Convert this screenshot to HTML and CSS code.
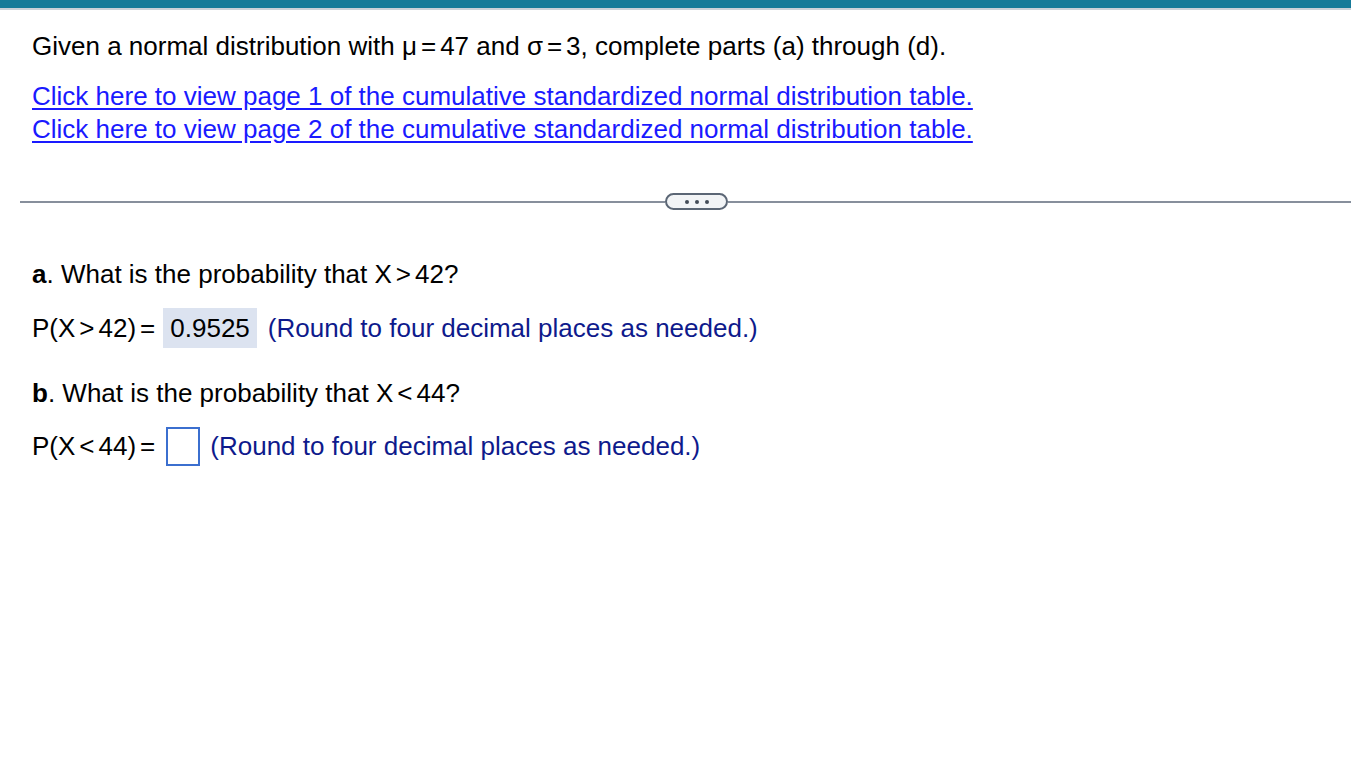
FILE: index.html
```html
<!DOCTYPE html>
<html>
<head>
<meta charset="utf-8">
<link rel="stylesheet" href="styles.css">
</head>
<body>
<div class="topbar"></div>
<div class="content">
  <p class="intro">Given a normal distribution with <span class="m">μ<span class="op">=</span>47</span> and <span class="m">σ<span class="op">=</span>3</span>, complete parts (a) through (d).</p>
  <div class="links">
    <a href="#">Click here to view page 1 of the cumulative standardized normal distribution table.</a>
    <a href="#">Click here to view page 2 of the cumulative standardized normal distribution table.</a>
  </div>
</div>
<div class="divider">
  <div class="line left"></div>
  <div class="pill"><span></span><span></span><span></span></div>
  <div class="line"></div>
</div>
<div class="content parts">
  <p class="q"><b>a</b>. What is the probability that X<span class="op">&gt;</span>42?</p>
  <p class="ans">P(X<span class="op">&gt;</span>42)<span class="op">=</span><span class="filled">0.9525</span><span class="hint">(Round to four decimal places as needed.)</span></p>
  <p class="q qb"><b>b</b>. What is the probability that X<span class="op">&lt;</span>44?</p>
  <p class="ans ansb">P(X<span class="op">&lt;</span>44)<span class="op">=</span><span class="empty"></span><span class="hint">(Round to four decimal places as needed.)</span></p>
</div>
</body>
</html>
```
FILE: styles.css
```css
html, body {
  margin: 0;
  padding: 0;
  background: #ffffff;
}
body {
  font-family: "Liberation Sans", Arial, sans-serif;
  font-size: 26px;
  color: #000;
}
.topbar {
  height: 8px;
  background: #157a99;
  border-bottom: 2px solid #c9d0d8;
}
.content {
  padding-left: 32px;
}
.intro {
  margin: 0;
  padding-top: 21px;
  line-height: 30px;
}
.op {
  margin: 0 4px;
}
.links {
  display: flex;
  flex-direction: column;
  margin-top: 19px;
}
.links a {
  color: #1a1aff;
  text-decoration: underline;
  text-underline-offset: 3px;
  line-height: 33px;
  align-self: flex-start;
}
.divider {
  display: flex;
  align-items: center;
  margin-top: 47px;
  padding-left: 20px;
}
.divider .line {
  flex: 1;
  height: 2px;
  background: #878f9c;
}
.divider .line.left {
  flex: 0 0 645px;
}
.divider .pill {
  box-sizing: border-box;
  width: 63px;
  height: 17px;
  border: 2px solid #5b6675;
  border-radius: 9px;
  background: #f2f4f6;
  display: flex;
  align-items: center;
  justify-content: center;
  gap: 6px;
}
.pill span {
  width: 4px;
  height: 4px;
  border-radius: 50%;
  background: #444c58;
}
.parts {
  margin-top: 49px;
}
.q {
  margin: 0;
  line-height: 30px;
}
.q b {
  font-weight: bold;
}
.qb {
  margin-top: 30px;
}
.ans {
  margin: 19px 0 0 0;
  height: 40px;
  display: flex;
  align-items: center;
  white-space: pre;
}
.ansb {
  height: 39px;
}
.filled {
  display: flex;
  align-items: center;
  height: 40px;
  background: #dce3f0;
  padding: 0 7px;
  margin: 0 11px 0 4px;
}
.empty {
  box-sizing: border-box;
  width: 34px;
  height: 39px;
  border: 2px solid #3b6fcf;
  margin: 0 10px 0 7px;
}
.hint {
  color: #0e1a8c;
}
```
